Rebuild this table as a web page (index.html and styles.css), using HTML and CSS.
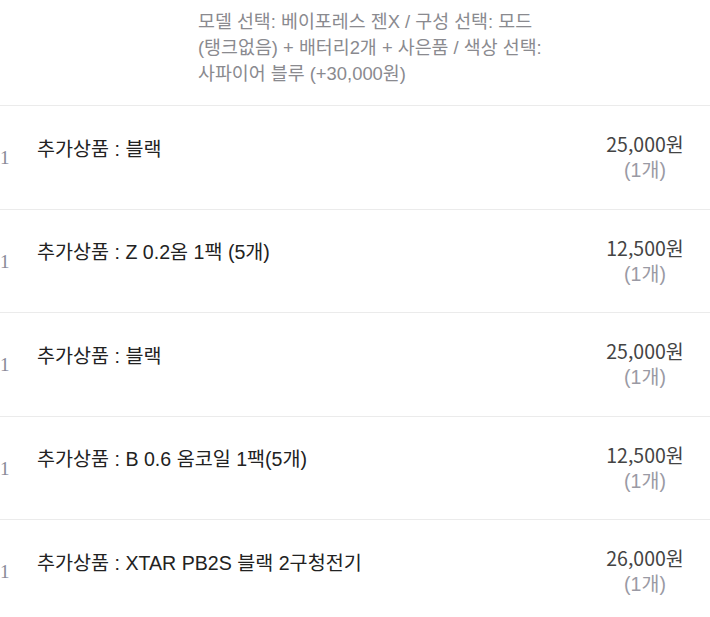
FILE: index.html
```html
<!DOCTYPE html>
<html lang="ko">
<head>
<meta charset="utf-8">
<link rel="stylesheet" href="styles.css">
</head>
<body>
<div class="opt">
  <p class="opt-text">모델 선택: 베이포레스 젠X / 구성 선택: 모드 (탱크없음) + 배터리2개 + 사은품 / 색상 선택: 사파이어 블루 (+30,000원)</p>
</div>
<ul class="list">
  <li class="row">
    <span class="num">1</span>
    <span class="name">추가상품 : 블랙</span>
    <span class="price"><span class="amt">25,000원</span><span class="qty">(1개)</span></span>
  </li>
  <li class="row">
    <span class="num">1</span>
    <span class="name">추가상품 : Z 0.2옴 1팩 (5개)</span>
    <span class="price"><span class="amt">12,500원</span><span class="qty">(1개)</span></span>
  </li>
  <li class="row">
    <span class="num">1</span>
    <span class="name">추가상품 : 블랙</span>
    <span class="price"><span class="amt">25,000원</span><span class="qty">(1개)</span></span>
  </li>
  <li class="row">
    <span class="num">1</span>
    <span class="name">추가상품 : B 0.6 옴코일 1팩(5개)</span>
    <span class="price"><span class="amt">12,500원</span><span class="qty">(1개)</span></span>
  </li>
  <li class="row">
    <span class="num">1</span>
    <span class="name">추가상품 : XTAR PB2S 블랙 2구청전기</span>
    <span class="price"><span class="amt">26,000원</span><span class="qty">(1개)</span></span>
  </li>
</ul>
</body>
</html>
```

FILE: styles.css
```css
html, body {
  margin: 0;
  padding: 0;
  background: #fff;
}
body {
  font-family: "Liberation Sans", "Noto Sans CJK KR", Arial, sans-serif;
  color: #222;
  overflow: hidden;
}
.opt {
  padding: 9px 0 18px 198px;
  border-bottom: 1px solid #ebebeb;
}
.opt-text {
  margin: 0;
  width: 352px;
  font-size: 18.4px;
  line-height: 26px;
  color: #8a8a8f;
  word-break: keep-all;
}
.list {
  list-style: none;
  margin: 0;
  padding: 0;
}
.row {
  display: flex;
  align-items: center;
  height: 102.5px;
  border-bottom: 1px solid #ebebeb;
}
.num {
  width: 8px;
  flex: none;
  text-align: right;
  font-family: "Liberation Serif", serif;
  font-size: 19px;
  color: #8a8a98;
  padding-top: 2px;
}
.name {
  flex: 1;
  padding-left: 29px;
  padding-bottom: 20px;
  font-size: 19.6px;
  color: #222;
}
.price {
  width: 110px;
  flex: none;
  margin-right: 10px;
  display: flex;
  flex-direction: column;
  align-items: center;
  font-family: "Noto Sans CJK KR", sans-serif;
  font-size: 19.5px;
  line-height: 26px;
}
.amt {
  color: #444;
}
.qty {
  color: #9a9aa4;
  font-family: "Liberation Sans", "Noto Sans CJK KR", sans-serif;
}
```
